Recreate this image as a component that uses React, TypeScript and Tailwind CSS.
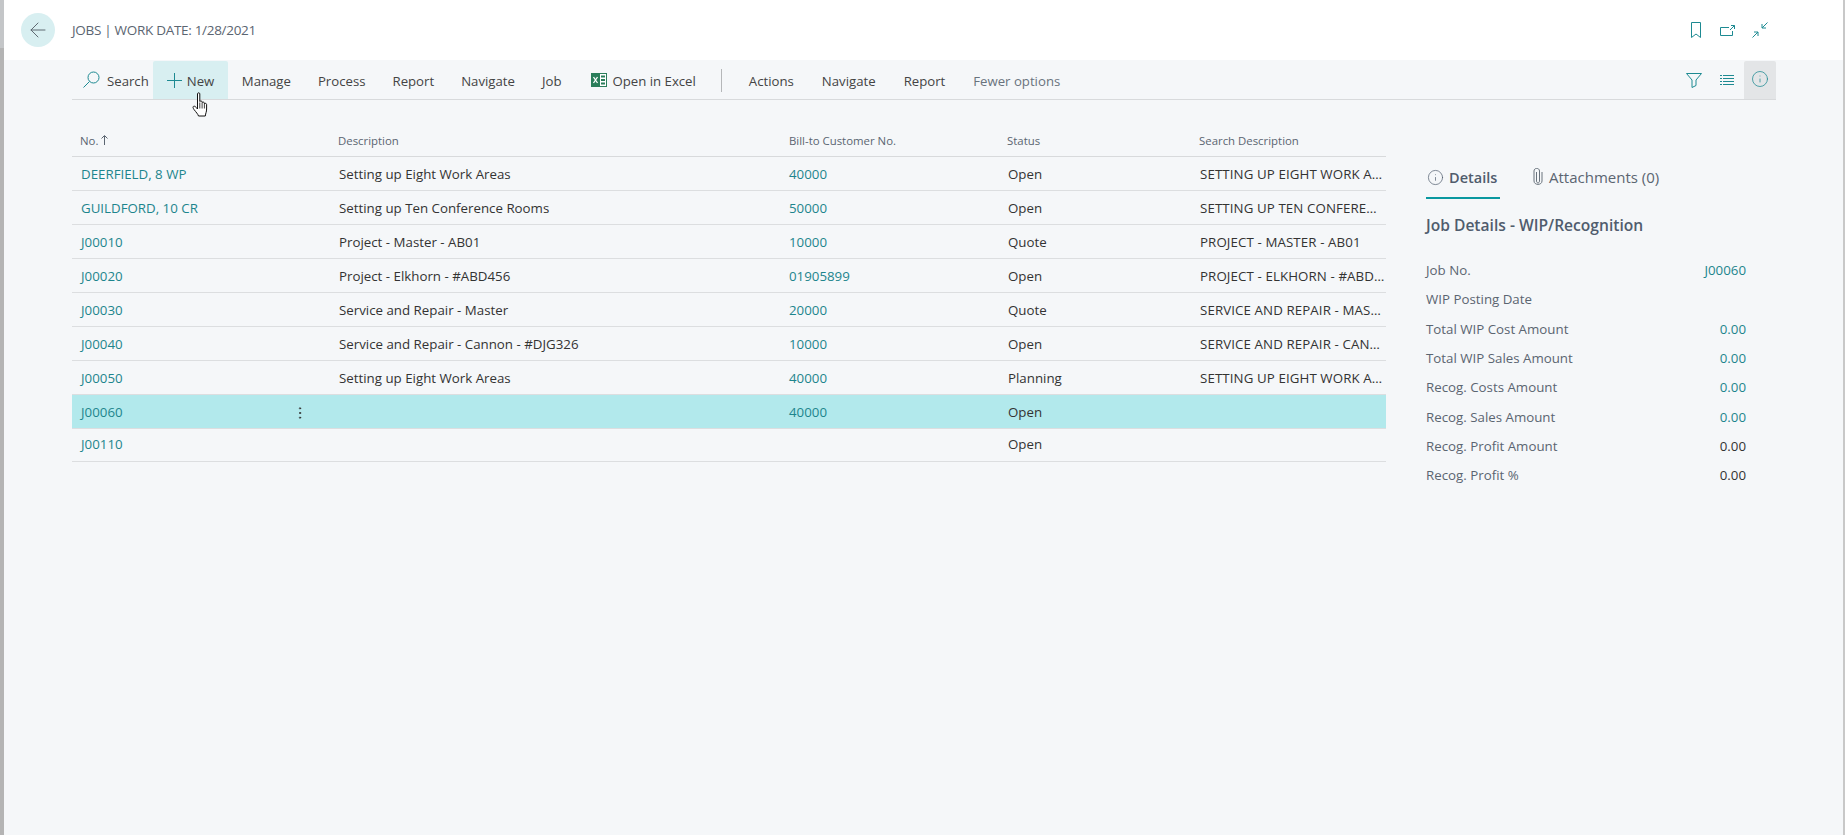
import { ArrowLeft, Info, MoreVertical } from 'lucide-react'

type JobRow = {
  no: string
  description: string
  customer: string
  status: string
  search: string
  selected?: boolean
}

const rows: JobRow[] = [
  { no: 'DEERFIELD, 8 WP', description: 'Setting up Eight Work Areas', customer: '40000', status: 'Open', search: 'SETTING UP EIGHT WORK AREAS' },
  { no: 'GUILDFORD, 10 CR', description: 'Setting up Ten Conference Rooms', customer: '50000', status: 'Open', search: 'SETTING UP TEN CONFERENCE ROOMS' },
  { no: 'J00010', description: 'Project - Master - AB01', customer: '10000', status: 'Quote', search: 'PROJECT - MASTER - AB01' },
  { no: 'J00020', description: 'Project - Elkhorn - #ABD456', customer: '01905899', status: 'Open', search: 'PROJECT - ELKHORN - #ABD456' },
  { no: 'J00030', description: 'Service and Repair - Master', customer: '20000', status: 'Quote', search: 'SERVICE AND REPAIR - MASTER' },
  { no: 'J00040', description: 'Service and Repair - Cannon - #DJG326', customer: '10000', status: 'Open', search: 'SERVICE AND REPAIR - CANNON - #DJG326' },
  { no: 'J00050', description: 'Setting up Eight Work Areas', customer: '40000', status: 'Planning', search: 'SETTING UP EIGHT WORK AREAS' },
  { no: 'J00060', description: '', customer: '40000', status: 'Open', search: '', selected: true },
  { no: 'J00110', description: '', customer: '', status: 'Open', search: '' },
]

const facts: { label: string; value: string; link?: boolean }[] = [
  { label: 'Job No.', value: 'J00060', link: true },
  { label: 'WIP Posting Date', value: '' },
  { label: 'Total WIP Cost Amount', value: '0.00', link: true },
  { label: 'Total WIP Sales Amount', value: '0.00', link: true },
  { label: 'Recog. Costs Amount', value: '0.00', link: true },
  { label: 'Recog. Sales Amount', value: '0.00', link: true },
  { label: 'Recog. Profit Amount', value: '0.00' },
  { label: 'Recog. Profit %', value: '0.00' },
]

const cols = 'grid grid-cols-[196px_64px_449px_218px_199px_188px]'

function ExcelIcon() {
  return (
    <svg width="16" height="16" viewBox="0 0 16 16" className="mr-[5px] shrink-0">
      <rect x="7" y="1.500" width="8.500" height="13" fill="#fff" stroke="#2a7d5a" />
      <path d="M10 4.500h4M10 8h4M10 11.500h4" stroke="#2a7d5a" strokeWidth="2" />
      <rect x="0" y="1" width="9" height="14" fill="#2a7d5a" />
      <path d="M2.500 5l4 6M6.500 5l-4 6" stroke="#fff" strokeWidth="1.300" />
    </svg>
  )
}

function HandCursor() {
  return (
    <svg width="18" height="25" viewBox="0 0 18 25" className="absolute left-[192px] top-[92px]">
      <path
        d="M5.500 1.800c0-1.300 2.300-1.300 2.300 0V9.500c.8-.8 2.300-.6 2.300.6v.4c.8-.7 2.200-.4 2.300.6v.5c.8-.6 2.200-.2 2.200.9V17c0 3-1 4-1.300 7H6.500c-.6-2-2.200-3.500-4.500-6.500C1 16 .6 14.800 1.600 14.300c1-.5 2.400.6 3.900 2.700z"
        fill="#fff"
        stroke="#111"
        strokeWidth="1"
        strokeLinejoin="round"
      />
      <path d="M7.800 10.500v6M10.100 10.800v5.700M12.400 11.500v5" stroke="#111" strokeWidth="0.800" />
    </svg>
  )
}

function ToolbarItem({ label, className = '' }: { label: string; className?: string }) {
  return <span className={`relative top-[2px] whitespace-nowrap text-[13.200px] ${className}`}>{label}</span>
}

export default function App() {
  return (
    <div className="relative flex h-[835px] w-[1845px] overflow-hidden bg-[#f5f7f9] font-['Open_Sans',sans-serif]">
      <div className="flex w-[4px] shrink-0 flex-col">
        <div className="h-[48px] bg-[#c4c6c8]" />
        <div className="flex-1 bg-[#b4b4b4]" />
      </div>

      <div className="flex min-w-0 flex-1 flex-col">
        {/* title bar */}
        <header className="flex h-[60px] shrink-0 items-center bg-white pl-[17px] pr-[75px]">
          <button className="flex h-[34px] w-[34px] items-center justify-center rounded-full bg-[#d8eff1]">
            <ArrowLeft size={24} strokeWidth={1} className="text-[#5f6a72]" />
          </button>
          <h1 className="ml-[17px] mt-[1px] text-[13.500px] tracking-[-0.300px] text-[#5b6571]">JOBS | WORK DATE: 1/28/2021</h1>
          <div className="ml-auto flex items-center text-[#1d8a92]">
            <svg width="10" height="16" viewBox="0 0 10 16" fill="none" stroke="currentColor" strokeWidth="1">
              <path d="M.5.500h9v15L5 12 .5 15.500z" />
            </svg>
            <svg width="15" height="11" viewBox="0 0 15 11" fill="none" stroke="currentColor" strokeWidth="1" className="ml-[19px]">
              <path d="M9 2.500H.5v8h12V6" />
              <path d="M10 5l4.500-4.500M11 .500h3.500V4" />
            </svg>
            <svg width="16" height="16" viewBox="0 0 16 16" fill="none" stroke="currentColor" strokeWidth="1" className="ml-[17px]">
              <path d="M15.500.500l-5.500 5.500M10 2v4h4M.5 15.500l5.500-5.500M2 10h4v4" />
            </svg>
          </div>
        </header>

        <div className="ml-[68px] mr-[67px] flex flex-1 flex-col">
          {/* action bar */}
          <nav className="mt-px flex h-[39px] shrink-0 items-center border-b border-[#d8dadc]">
            <div className="flex items-center pl-[11px]">
              <svg width="17" height="17" viewBox="0 0 17 17" fill="none" stroke="#1d8a92" strokeWidth="1">
                <circle cx="10.500" cy="6.500" r="5.500" />
                <path d="M6.500 10.500L.5 16.500" />
              </svg>
              <ToolbarItem label="Search" className="ml-[7px] text-[#444]" />
            </div>
            <div className="ml-[4px] flex h-[38px] w-[75px] items-center rounded-t-[2px] bg-[#d8eff1] pl-[14px]">
              <svg width="15" height="15" viewBox="0 0 15 15" stroke="#1d8a92" strokeWidth="1">
                <path d="M7.500 0v15M0 7.500h15" />
              </svg>
              <ToolbarItem label="New" className="ml-[5px] text-[#444]" />
            </div>
            <ToolbarItem label="Manage" className="ml-[14px] text-[#444]" />
            <ToolbarItem label="Process" className="ml-[27px] text-[#444]" />
            <ToolbarItem label="Report" className="ml-[27px] text-[#444]" />
            <ToolbarItem label="Navigate" className="ml-[27px] text-[#444]" />
            <ToolbarItem label="Job" className="ml-[27px] text-[#444]" />
            <div className="ml-[30px] flex items-center">
              <ExcelIcon />
              <ToolbarItem label="Open in Excel" className="text-[#444]" />
            </div>
            <div className="ml-[25px] h-[23px] w-px bg-[#b5b7b9]" />
            <ToolbarItem label="Actions" className="ml-[27px] text-[#444]" />
            <ToolbarItem label="Navigate" className="ml-[28px] text-[#444]" />
            <ToolbarItem label="Report" className="ml-[28px] text-[#444]" />
            <ToolbarItem label="Fewer options" className="ml-[28px] text-[#69737d]" />
            <div className="ml-auto flex h-full items-center text-[#1d8a92]">
              <svg width="16" height="15" viewBox="0 0 16 15" fill="none" stroke="currentColor" strokeWidth="1">
                <path d="M.5.500h15L10 7v5.500l-4 2V7z" />
              </svg>
              <svg width="14" height="10" viewBox="0 0 14 10" stroke="currentColor" strokeWidth="1" className="ml-[18px]">
                <path d="M0 .500h2M3 .500h11M0 3.500h2M3 3.500h11M0 6.500h2M3 6.500h11M0 9.500h2M3 9.500h11" />
              </svg>
              <div className="ml-[10px] flex h-[38px] w-[32px] items-center justify-center rounded-t-[2px] bg-[#e3e5e7]">
                <Info size={18} strokeWidth={1} className="-mt-[3px]" />
              </div>
            </div>
          </nav>

          <div className="flex">
            {/* jobs list */}
            <main className="w-[1314px] shrink-0 pt-[20px]">
              <div className={`${cols} h-[37px] items-center border-b border-[#d8dadc] pt-[5px] text-[11.400px] text-[#5b6571]`}>
                <span className="flex items-center pl-[8px]">
                  No.
                  <svg width="7" height="10" viewBox="0 0 7 10" fill="none" stroke="#5b6571" strokeWidth="1" className="ml-[3px]">
                    <path d="M3.500 10V1M.5 3.500l3-3 3 3" />
                  </svg>
                </span>
                <span />
                <span className="pl-[6px]">Description</span>
                <span className="pl-[8px]">Bill-to Customer No.</span>
                <span className="pl-[8px]">Status</span>
                <span className="pl-[1px]">Search Description</span>
              </div>
              {rows.map((row, i) => {
                const isLast = i === rows.length - 1
                return (
                  <div
                    key={row.no}
                    className={`${cols} items-center border-b border-[#dcdee0] text-[13.300px] text-[#333] ${isLast ? 'h-[33px]' : 'h-[34px] pt-[2px]'} ${row.selected ? 'bg-[#b2e9ec]' : ''}`}
                  >
                    <a className="truncate pl-[9px] text-[#1d858d]">{row.no}</a>
                    <span className="flex justify-center">
                      {row.selected && <MoreVertical size={16} strokeWidth={1.400} className="text-[#333]" />}
                    </span>
                    <span className="truncate pl-[7px]">{row.description}</span>
                    <a className="truncate pl-[8px] text-[#1d858d]">{row.customer}</a>
                    <span className="pl-[9px]">{row.status}</span>
                    <span className="truncate pl-[2px] tracking-[0.100px]">{row.search}</span>
                  </div>
                )
              })}
            </main>

            {/* factbox */}
            <aside className="ml-[40px] w-[320px] pt-[66px]">
              <div className="flex h-[33px] items-start">
                <div className="flex h-full w-[74px] items-start gap-[5px] border-b-2 border-[#0a98a0] pt-[1px] text-[14.500px] font-semibold text-[#505c6d]">
                  <Info size={17} strokeWidth={1} className="ml-[1px] mt-[2px] shrink-0" />
                  Details
                </div>
                <div className="ml-[33px] flex items-start gap-[6px] text-[15px] leading-[22px] text-[#5b6571]">
                  <svg width="10" height="17" viewBox="0 0 10 17" fill="none" stroke="#69737d" strokeWidth="1" className="mt-[2px] shrink-0">
                    <path d="M3.500 4v9c0 2.500 3 2.500 3 0V3c0-3.500-5.500-3.500-5.500 0v10c0 4.500 8 4.500 8 0V4" />
                  </svg>
                  Attachments (0)
                </div>
              </div>
              <h2 className="mt-[15px] text-[15.600px] font-semibold text-[#505c6d]">Job Details - WIP/Recognition</h2>
              <dl className="mt-[19px] flex flex-col">
                {facts.map((fact) => (
                  <div key={fact.label} className="flex h-[29.300px] items-center justify-between text-[13.300px]">
                    <dt className="text-[#5b6571]">{fact.label}</dt>
                    <dd className={fact.link ? 'text-[#1d858d]' : 'text-[#333]'}>{fact.value}</dd>
                  </div>
                ))}
              </dl>
            </aside>
          </div>
        </div>
      </div>

      <div className="w-[2px] shrink-0 bg-[#c8c8c8]" />
      <HandCursor />
    </div>
  )
}
